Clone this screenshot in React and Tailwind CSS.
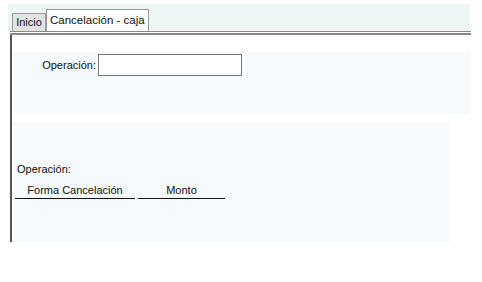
export default function App() {
  return (
    <div className="w-[482px] h-[282px] bg-white relative overflow-hidden font-['Liberation_Sans',Arial,sans-serif] text-[11px] text-[#111]">
      {/* tab strip */}
      <div className="mt-[4px] ml-[8px] w-[462px] h-[27px] bg-[#eef5f5] flex items-end pl-[4px]">
        <div className="h-[18px] w-[34px] bg-[#e4e4e4] border border-[#999] border-b-0 flex items-center justify-center text-[11px] leading-none whitespace-nowrap">
          Inicio
        </div>
        <div className="h-[22px] w-[103px] bg-white border border-[#999] border-b-0 flex items-center pl-[3px] text-[11.5px] leading-none whitespace-nowrap">
          Cancelación - caja
        </div>
      </div>
      <div className="ml-[10px] w-[461px] h-[1px] bg-[#888]" />
      <div className="ml-[10px] w-[461px] h-[1px] bg-white" />
      <div className="ml-[10px] w-[461px] h-[2px] bg-[#888]" />

      {/* body */}
      <div className="ml-[10px] border-l-2 border-[#555] h-[207px] pt-[17px]">
        <div className="w-[458px] h-[62px] bg-[#f7fafd] pt-[2px] flex items-start">
          <span className="w-[86px] pr-[2px] text-right mt-[4px] leading-[14px] whitespace-nowrap">Operación:</span>
          <div className="w-[144px] h-[22px] bg-white border border-[#777]" />
        </div>
        <div className="mt-[8px] w-[438px] h-[120px] bg-[#f7fafc] pt-[40px]">
          <div className="ml-[5px] leading-[14px]">Operación:</div>
          <div className="ml-[3px] mt-[7px] flex gap-[3px]">
            <div className="w-[120px] border-b border-[#111] text-center leading-[14px] pb-[1px] whitespace-nowrap">
              Forma Cancelación
            </div>
            <div className="w-[87px] border-b border-[#111] text-center leading-[14px] pb-[1px]">
              Monto
            </div>
          </div>
        </div>
      </div>
    </div>
  );
}
